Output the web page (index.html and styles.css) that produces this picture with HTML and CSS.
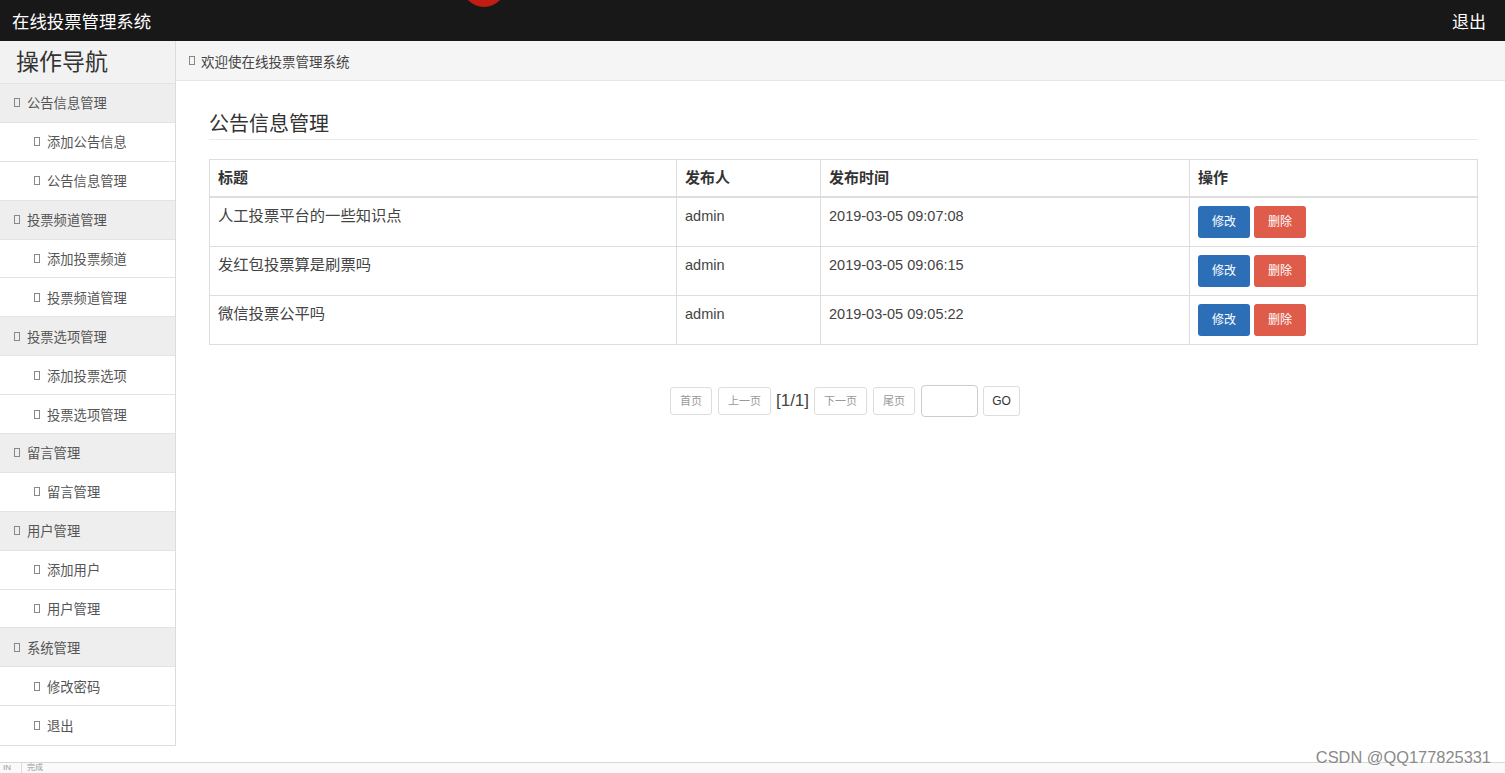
FILE: index.html
```html
<!DOCTYPE html>
<html lang="zh-CN">
<head>
<meta charset="utf-8">
<title>在线投票管理系统</title>
<link rel="stylesheet" href="styles.css">
</head>
<body>
<div class="page">
  <header class="topbar">
    <div class="brand">在线投票管理系统</div>
    <div class="logout">退出</div>
    <div class="rec-dot"></div>
  </header>
  <div class="body">
    <aside class="sidebar">
      <div class="side-title">操作导航</div>
      <ul class="menu">
        <li class="grp"><span class="ico"></span>公告信息管理</li>
        <li class="sub"><span class="ico"></span>添加公告信息</li>
        <li class="sub"><span class="ico"></span>公告信息管理</li>
        <li class="grp"><span class="ico"></span>投票频道管理</li>
        <li class="sub"><span class="ico"></span>添加投票频道</li>
        <li class="sub"><span class="ico"></span>投票频道管理</li>
        <li class="grp"><span class="ico"></span>投票选项管理</li>
        <li class="sub"><span class="ico"></span>添加投票选项</li>
        <li class="sub"><span class="ico"></span>投票选项管理</li>
        <li class="grp"><span class="ico"></span>留言管理</li>
        <li class="sub"><span class="ico"></span>留言管理</li>
        <li class="grp"><span class="ico"></span>用户管理</li>
        <li class="sub"><span class="ico"></span>添加用户</li>
        <li class="sub"><span class="ico"></span>用户管理</li>
        <li class="grp"><span class="ico"></span>系统管理</li>
        <li class="sub"><span class="ico"></span>修改密码</li>
        <li class="sub"><span class="ico"></span>退出</li>
      </ul>
    </aside>
    <main class="main">
      <div class="crumb"><span class="ico"></span>欢迎使在线投票管理系统</div>
      <div class="content">
        <h2 class="title">公告信息管理</h2>
        <table class="grid">
          <thead>
            <tr>
              <th class="c1">标题</th>
              <th class="c2">发布人</th>
              <th class="c3">发布时间</th>
              <th class="c4">操作</th>
            </tr>
          </thead>
          <tbody>
            <tr>
              <td class="cn">人工投票平台的一些知识点</td>
              <td>admin</td>
              <td>2019-03-05 09:07:08</td>
              <td><span class="btn edit">修改</span><span class="btn del">删除</span></td>
            </tr>
            <tr>
              <td class="cn">发红包投票算是刷票吗</td>
              <td>admin</td>
              <td>2019-03-05 09:06:15</td>
              <td><span class="btn edit">修改</span><span class="btn del">删除</span></td>
            </tr>
            <tr>
              <td class="cn">微信投票公平吗</td>
              <td>admin</td>
              <td>2019-03-05 09:05:22</td>
              <td><span class="btn edit">修改</span><span class="btn del">删除</span></td>
            </tr>
          </tbody>
        </table>
        <div class="pager">
          <span class="pbtn">首页</span>
          <span class="pbtn">上一页</span>
          <span class="pnum">[1/1]</span>
          <span class="pbtn">下一页</span>
          <span class="pbtn">尾页</span>
          <span class="pinput"></span>
          <span class="pgo">GO</span>
        </div>
      </div>
    </main>
  </div>
  <footer class="status"><span class="st-ico">IN</span><span class="st-txt">完成</span></footer>
  <div class="watermark">CSDN @QQ177825331</div>
</div>
</body>
</html>
```

FILE: styles.css
```css
* { box-sizing: border-box; }
html, body {
  margin: 0;
  padding: 0;
  width: 1505px;
  height: 773px;
  overflow: hidden;
  background: #fff;
  font-family: "Liberation Sans", "Noto Sans CJK SC", sans-serif;
  color: #333;
}
.page {
  position: relative;
  display: flex;
  flex-direction: column;
  height: 773px;
}
.topbar {
  position: relative;
  height: 41px;
  flex: none;
  background: #181818;
  color: #fff;
  display: flex;
  align-items: center;
  justify-content: space-between;
  padding: 0 19px 0 12px;
  overflow: hidden;
}
.brand { font-size: 17.4px; }
.logout { font-size: 17px; }
.rec-dot {
  position: absolute;
  left: 462px;
  top: -37px;
  width: 44px;
  height: 44px;
  border-radius: 50%;
  background: #c21d14;
}
.body {
  flex: 1;
  display: flex;
  min-height: 0;
}
.sidebar {
  width: 176px;
  flex: none;
  align-self: flex-start;
  border-right: 1px solid #dcdcdc;
  border-bottom: 1px solid #dcdcdc;
}
.side-title {
  height: 43px;
  background: #f2f2f2;
  font-size: 23px;
  padding-left: 16px;
  line-height: 42px;
  color: #333;
  border-bottom: 1px solid #e2e2e2;
}
.menu {
  list-style: none;
  margin: 0;
  padding: 0;
}
.menu li {
  height: 38.9px;
  display: flex;
  align-items: center;
  font-size: 13.3px;
  color: #555;
  border-bottom: 1px solid #e3e3e3;
}
.menu li:last-child { border-bottom: none; }
.menu .grp {
  background: #eeeeee;
  padding-left: 14px;
}
.menu .sub {
  background: #fff;
  padding-left: 34px;
}
.ico {
  display: inline-block;
  width: 6px;
  height: 9px;
  border: 1px solid #888;
  margin-right: 7px;
  flex: none;
}
.main {
  flex: 1;
  min-width: 0;
}
.crumb {
  height: 40px;
  background: #f5f5f5;
  border-bottom: 1px solid #e6e6e6;
  display: flex;
  align-items: center;
  padding-left: 13px;
  font-size: 13.5px;
  color: #444;
}
.crumb .ico { margin-right: 6px; }
.content {
  padding: 28px 27px 0 33px;
}
.title {
  margin: 0;
  font-size: 20px;
  font-weight: normal;
  line-height: 30px;
  color: #333;
  border-bottom: 1px solid #eaeaea;
  padding-bottom: 0;
}
.grid {
  margin-top: 19px;
  width: 100%;
  border-collapse: collapse;
  font-size: 14.5px;
  table-layout: fixed;
}
.grid th, .grid td {
  border: 1px solid #dddddd;
  padding: 8px 8px;
  text-align: left;
  vertical-align: top;
  line-height: 20px;
}
.grid th {
  font-weight: bold;
  border-bottom: 2px solid #dddddd;
  padding-top: 8px;
  padding-bottom: 8px;
  font-size: 15px;
}
.grid td { color: #444; }
.grid td.cn { font-size: 15.3px; }
.c1 { width: 467px; }
.c2 { width: 144px; }
.c3 { width: 369px; }
.c4 { width: auto; }
.btn {
  display: inline-block;
  width: 52px;
  height: 32px;
  line-height: 32px;
  text-align: center;
  font-size: 12px;
  color: #fff;
  border-radius: 3px;
  vertical-align: top;
}
.btn.edit { background: #2c6fb7; margin-right: 4px; }
.btn.del { background: #df5b4a; }
.pager {
  margin-top: 40px;
  display: flex;
  justify-content: center;
  align-items: center;
}
.pbtn {
  height: 28px;
  line-height: 26px;
  padding: 0 9px;
  font-size: 11px;
  color: #999;
  border: 1px solid #ddd;
  border-radius: 3px;
  margin: 0 3px;
}
.pnum {
  font-size: 17px;
  color: #444;
  margin: 0 2px;
}
.pinput {
  display: inline-block;
  width: 57px;
  height: 32px;
  border: 1px solid #ccc;
  border-radius: 4px;
  margin: 0 4px 0 3px;
}
.pgo {
  height: 30px;
  line-height: 28px;
  width: 37px;
  text-align: center;
  font-size: 12px;
  color: #333;
  border: 1px solid #ddd;
  border-radius: 3px;
  margin-left: 1px;
}
.status {
  height: 11px;
  flex: none;
  border-top: 1px solid #d8d8d8;
  background: #fafafa;
  overflow: hidden;
  display: flex;
  align-items: center;
  font-size: 8px;
  color: #999;
}
.st-ico {
  width: 22px;
  padding-left: 3px;
  border-right: 1px solid #ddd;
  line-height: 10px;
}
.st-txt {
  padding-left: 5px;
  line-height: 10px;
}
.watermark {
  position: absolute;
  right: 14px;
  bottom: 6px;
  font-size: 16.4px;
  color: #8a8a8a;
}
```
